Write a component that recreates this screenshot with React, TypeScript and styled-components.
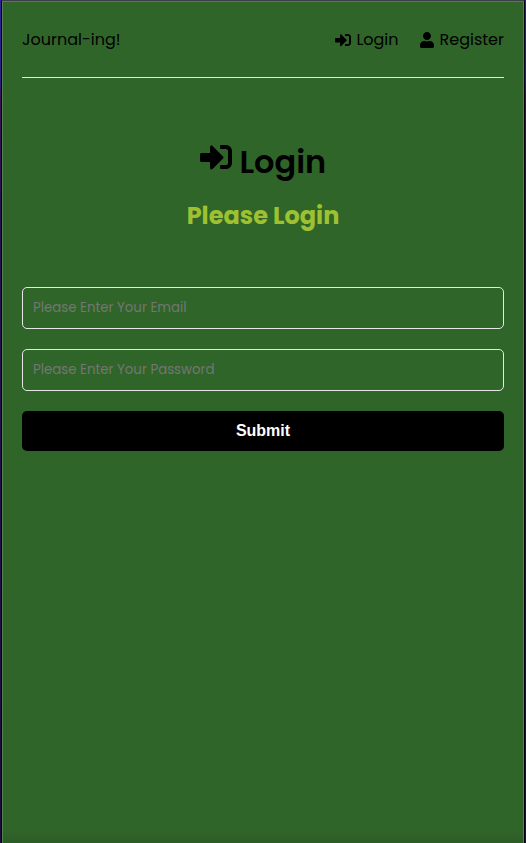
import React from 'react';
import styled, { createGlobalStyle } from 'styled-components';
import { FaSignInAlt, FaUser } from 'react-icons/fa';

const GlobalStyle = createGlobalStyle`
  * { box-sizing: border-box; margin: 0; padding: 0; }
  body {
    font-family: Poppins, Inter, sans-serif;
    color: #000;
    background: #08040f;
  }
`;

const Desktop = styled.div`
  height: 843px;
  padding: 0 1px;
  background: linear-gradient(#2f1f9a 0, #2f1f80 80px, #3a1050 100px, #271050 200px, #1c0d3c 843px);
`;

const WindowEdge = styled.div`
  height: 843px;
  border: 1px solid #08040f;
  border-top-color: #3f3d4a;
  border-width: 1px 1px 0;
  overflow: hidden;
`;

const Page = styled.div`
  height: 842px;
  padding: 0 19px;
  background: linear-gradient(#30652a 0, #30652a 829px, #2b5b26 842px);
  border: 1px solid #53804e;
  border-top: 1px solid #62706a;
  border-bottom: 0;
`;

const Header = styled.header`
  display: flex;
  justify-content: space-between;
  align-items: center;
  height: 76px;
  border-bottom: 1px solid #e6e6e6;
`;

const Label = styled.span`
  font-size: 16px;
  line-height: 24px;
  white-space: nowrap;
`;

const NavList = styled.ul`
  display: flex;
  list-style: none;
  gap: 20px;
`;

const NavLink = styled.a`
  display: flex;
  align-items: center;
  gap: 5px;
  color: #000;

  svg { font-size: 16px; }
`;

const Heading = styled.section`
  display: flex;
  flex-direction: column;
  align-items: center;
  height: 209px;
  padding-top: 60px;
`;

const Title = styled.h1`
  height: 48px;
  font-size: 32px;
  line-height: 48px;
  font-weight: 600;
`;

const Subtitle = styled.p`
  margin-top: 12px;
  color: #9fc131;
  font-size: 24px;
  line-height: 36px;
  font-weight: 700;
`;

const Form = styled.form`
  display: flex;
  flex-direction: column;
  gap: 20px;
`;

const Field = styled.input`
  width: 100%;
  height: 42px;
  padding: 0 10px;
  border: 1px solid #e6e6e6;
  border-radius: 5px;
  background: transparent;
  font-family: inherit;
  font-size: 13.333px;

  &::placeholder { color: #757575; opacity: 1; }
`;

const SubmitButton = styled.button`
  height: 40px;
  border: 0;
  border-radius: 5px;
  background: #000;
  color: #fff;
  font: 700 16px "Liberation Sans", Arial, sans-serif;
`;

export default function App() {
  return (
    <>
      <GlobalStyle />
      <Desktop>
        <WindowEdge>
          <Page>
            <Header>
              <Label>Journal-ing!</Label>
              <NavList>
                <li><NavLink><FaSignInAlt /><Label>Login</Label></NavLink></li>
                <li><NavLink><FaUser /><Label>Register</Label></NavLink></li>
              </NavList>
            </Header>
            <Heading>
              <Title><FaSignInAlt /> Login</Title>
              <Subtitle>Please Login</Subtitle>
            </Heading>
            <Form>
              <Field type="email" placeholder="Please Enter Your Email" />
              <Field type="password" placeholder="Please Enter Your Password" />
              <SubmitButton type="button">Submit</SubmitButton>
            </Form>
          </Page>
        </WindowEdge>
      </Desktop>
    </>
  );
}
